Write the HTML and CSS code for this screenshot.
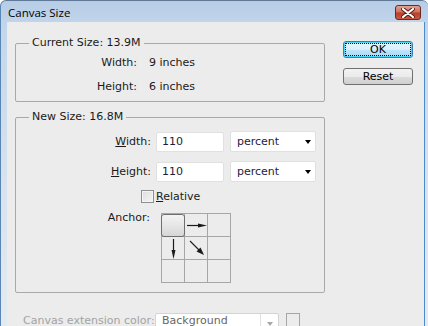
FILE: index.html
```html
<!DOCTYPE html>
<html lang="en">
<head>
    <meta charset="UTF-8">
    <title>Canvas Size</title>
    <link rel="stylesheet" href="styles.css">
</head>
<body>
    <div class="window">
        <!-- Title bar -->
        <div class="titlebar">
            <span class="title">Canvas Size</span>
            <div class="close">
                <svg width="14" height="10" viewBox="0 0 14 10">
                    <path d="M2 1 L12 9 M12 1 L2 9" stroke="#5a1a12" stroke-width="4" stroke-linecap="round"/>
                    <path d="M2 1 L12 9 M12 1 L2 9" stroke="#ffffff" stroke-width="2.2" stroke-linecap="round"/>
                </svg>
            </div>
        </div>

        <div class="client">
            <div class="main">
                <div class="col-left">
                    <div class="group current">
                        <div class="group-title">Current Size: 13.9M</div>
                        <div class="info-grid">
                            <span class="info-label">Width:</span><span>9 inches</span>
                            <span class="info-label">Height:</span><span>6 inches</span>
                        </div>
                    </div>

                    <div class="group newsize">
                        <div class="group-title">New Size: 16.8M</div>
                        <div class="field-row">
                            <label class="field-label"><u>W</u>idth:</label>
                            <input class="num-input" type="text" value="110">
                            <div class="select unit-select"><span>percent</span><span class="caret"></span></div>
                        </div>
                        <div class="field-row second">
                            <label class="field-label"><u>H</u>eight:</label>
                            <input class="num-input" type="text" value="110">
                            <div class="select unit-select"><span>percent</span><span class="caret"></span></div>
                        </div>
                        <div class="check-row">
                            <span class="checkbox"></span>
                            <span class="check-label"><u>R</u>elative</span>
                        </div>
                        <div class="anchor-row">
                            <span class="anchor-label">Anchor:</span>
                            <div class="anchor">
                                <div class="cell"><div class="anchor-btn"></div></div>
                                <div class="cell">
                                    <svg width="22" height="22" viewBox="0 0 22 22">
                                        <path d="M2 11.5 H15" stroke="#1a1a1a" stroke-width="1.2"/>
                                        <polygon points="13,9.5 22,11.5 13,13.5" fill="#1a1a1a"/>
                                    </svg>
                                </div>
                                <div class="cell"></div>
                                <div class="cell">
                                    <svg width="22" height="22" viewBox="0 0 22 22">
                                        <path d="M11.5 2 V15" stroke="#1a1a1a" stroke-width="1.2"/>
                                        <polygon points="9.5,13 11.5,22 13.5,13" fill="#1a1a1a"/>
                                    </svg>
                                </div>
                                <div class="cell">
                                    <svg width="22" height="22" viewBox="0 0 22 22">
                                        <path d="M5 4 L14 13" stroke="#1a1a1a" stroke-width="1.1"/>
                                        <polygon points="11.5,14.5 19,18 15.5,10.5" fill="#1a1a1a"/>
                                    </svg>
                                </div>
                                <div class="cell"></div>
                                <div class="cell"></div>
                                <div class="cell"></div>
                                <div class="cell"></div>
                            </div>
                        </div>
                    </div>
                </div>

                <div class="col-right">
                    <button class="btn btn-default"><span class="focus-ring">OK</span></button>
                    <button class="btn">Reset</button>
                </div>
            </div>

            <div class="ext-row">
                <span class="ext-label">Canvas extension color:</span>
                <div class="select ext-select"><span class="ext-text">Background</span><span class="ext-arrow"><span class="caret"></span></span></div>
                <span class="swatch"></span>
            </div>
        </div>
    </div>
</body>
</html>
```

FILE: styles.css
```css
body {
    margin: 0;
    font-family: 'DejaVu Sans', sans-serif;
    font-size: 11px;
    color: #1a1a1a;
    background: #ffffff;
    overflow: hidden;
}

.window {
    width: 428px;
    height: 326px;
    display: flex;
    flex-direction: column;
    background: linear-gradient(#b7cde6, #c4d7ec 30px, #d9e4ef 200px, #e4eaf1);
    border-left: 1px solid #5a86b6;
    border-top: 1px solid #5e7896;
    border-radius: 6px 6px 0 0;
    box-sizing: border-box;
}

/* Title bar */
.titlebar {
    height: 21px;
    flex-shrink: 0;
    display: flex;
    align-items: flex-start;
    padding: 0 7px 0 7px;
}

.title {
    font-family: 'Open Sans', sans-serif;
    font-size: 11.5px;
    color: #000;
    line-height: 14px;
    margin-top: 5px;
}

.close {
    margin-left: auto;
    margin-top: 4px;
    width: 26px;
    height: 15px;
    box-sizing: border-box;
    border: 1px solid #6b2a20;
    border-radius: 3px;
    background: linear-gradient(#e4a394, #d0705e 45%, #b8402c 55%, #c85a42);
    display: flex;
    align-items: center;
    justify-content: center;
}

/* Client area */
.client {
    flex: 1;
    margin: 0 3px 0 6px;
    background: #ececec;
    border-right: 1px solid #4b8bc8;
}

.main {
    display: flex;
}

.col-left {
    margin-left: 8px;
    width: 310px;
    padding-top: 21px;
}

.group {
    border: 1px solid #a9a9a9;
    border-radius: 2px;
}

.group-title {
    width: fit-content;
    margin: -8px 0 0 13px;
    padding: 0 3px;
    background: #ececec;
    line-height: 14px;
    color: #1a1a1a;
}

.info-grid {
    display: grid;
    grid-template-columns: 121px auto;
    column-gap: 12px;
    row-gap: 10px;
    margin-top: 6px;
    padding-bottom: 7px;
    line-height: 14px;
}

.info-label {
    text-align: right;
}

.newsize {
    margin-top: 15px;
    padding-bottom: 9px;
}

.field-row {
    display: flex;
    align-items: center;
    height: 21px;
    margin-top: 7px;
}

.field-row.second {
    margin-top: 9px;
}

.field-label {
    width: 135px;
    text-align: right;
}

.num-input {
    margin-left: 5px;
    width: 68px;
    height: 20px;
    box-sizing: border-box;
    border: 1px solid #e0e0e0;
    border-radius: 2px;
    padding: 0 0 0 5px;
    font-family: 'DejaVu Sans', sans-serif;
    font-size: 11px;
    color: #1e1b3c;
    background: #fff;
    outline: none;
}

.select {
    display: flex;
    align-items: center;
    box-sizing: border-box;
    background: #fff;
    border: 1px solid #e0e0e0;
    border-radius: 2px;
}

.unit-select {
    margin-left: 6px;
    width: 86px;
    height: 21px;
    padding: 0 4px 0 6px;
    color: #1e1b3c;
}

.caret {
    margin-left: auto;
    width: 0;
    height: 0;
    border-left: 3.5px solid transparent;
    border-right: 3.5px solid transparent;
    border-top: 4px solid #000;
}

.check-row {
    display: flex;
    align-items: center;
    height: 13px;
    margin-top: 8px;
    padding-left: 125px;
}

.checkbox {
    width: 13px;
    height: 13px;
    box-sizing: border-box;
    border: 1px solid #8f8f8f;
    background: linear-gradient(135deg, #dcdcdc, #f6f6f6);
    box-shadow: inset 0 0 0 1px #f4f4f4;
}

.check-label {
    margin-left: 2px;
}

.anchor-row {
    display: flex;
    align-items: flex-start;
    margin-top: 10px;
}

.anchor-label {
    width: 134px;
    text-align: right;
    line-height: 12px;
    margin-top: -1px;
}

.anchor {
    margin-left: 11px;
    display: grid;
    grid-template-columns: repeat(3, 23px);
    grid-template-rows: repeat(3, 23px);
    border-top: 1px solid #a6a6a6;
    border-left: 1px solid #a6a6a6;
}

.cell {
    box-sizing: border-box;
    border-right: 1px solid #a6a6a6;
    border-bottom: 1px solid #a6a6a6;
}

.anchor-btn {
    width: 24px;
    height: 23px;
    margin: 0 0 0 -1px;
    box-sizing: border-box;
    border: 1px solid #6f6f6f;
    border-radius: 3px;
    background: linear-gradient(#f3f3f3, #e6e6e6 50%, #d6d6d6);
}

/* Buttons */
.col-right {
    margin-left: 18px;
    width: 70px;
    padding-top: 19px;
    display: flex;
    flex-direction: column;
}

.btn {
    width: 70px;
    height: 17px;
    padding: 0;
    box-sizing: border-box;
    border: 1px solid #707070;
    border-radius: 3px;
    background: linear-gradient(#f2f2f2, #ebebeb 50%, #dddddd 51%, #cfcfcf);
    font-family: 'DejaVu Sans', sans-serif;
    font-size: 11px;
    color: #000;
    line-height: 13px;
}

.btn + .btn {
    margin-top: 10px;
}

.btn-default {
    border-color: #3c7fb1;
    background: linear-gradient(#eaf6fd, #d9f0fc 50%, #bee6fd 51%, #a7d9f5);
    box-shadow: inset 0 0 0 1px #48d6f8;
    padding: 1px;
}

.focus-ring {
    display: block;
    height: 13px;
    border: 1px dotted #000;
    box-sizing: border-box;
    line-height: 11px;
}

/* Extension color row */
.ext-row {
    display: flex;
    align-items: flex-start;
    margin-top: 20px;
    padding-left: 16px;
}

.ext-label {
    width: 132px;
    color: #a3a3a3;
    line-height: 14px;
    margin-top: 1px;
}

.ext-select {
    width: 124px;
    height: 21px;
    padding-left: 6px;
    align-items: flex-start;
    color: #6a6560;
    border-color: #d4d4d4;
}

.ext-text {
    line-height: 14px;
}

.ext-arrow {
    margin-left: auto;
    width: 17px;
    height: 100%;
    border-left: 1px solid #e2e2e2;
    display: flex;
    align-items: center;
    justify-content: center;
}

.ext-arrow .caret {
    margin-left: 0;
    border-top-color: #a8a8a8;
}

.swatch {
    margin-left: 7px;
    width: 14px;
    height: 20px;
    box-sizing: border-box;
    border: 1px solid #a6a6a6;
    background: #ececec;
}
```
